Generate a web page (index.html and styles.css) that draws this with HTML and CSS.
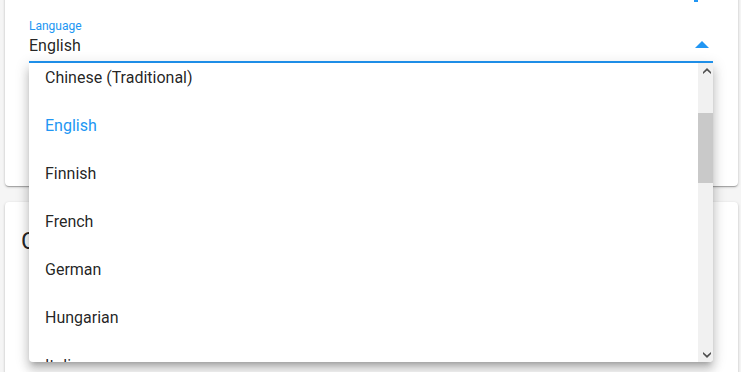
FILE: index.html
```html
<!DOCTYPE html>
<html lang="en">
<head>
<meta charset="utf-8">
<title>Settings</title>
<link rel="stylesheet" href="styles.css">
</head>
<body>
<div class="page">
  <section class="card card-general">
    <div class="top-row"><span class="top-icon"></span></div>
    <div class="field">
      <div class="field-label">Language</div>
      <div class="field-input">
        <span class="field-value">English</span>
        <svg class="field-arrow" width="14" height="7" viewBox="0 0 14 7"><path d="M0 7 L7 0 L14 7 Z" fill="#2196f3"/></svg>
      </div>
    </div>
  </section>
  <section class="card card-theme">
    <h2 class="card-title">Color theme</h2>
  </section>
</div>
<div class="menu">
  <div class="menu-viewport">
    <ul class="menu-list">
      <li class="menu-item">Arabic</li>
      <li class="menu-item">Catalan</li>
      <li class="menu-item">Chinese (Simplified)</li>
      <li class="menu-item">Chinese (Traditional)</li>
      <li class="menu-item is-selected">English</li>
      <li class="menu-item">Finnish</li>
      <li class="menu-item">French</li>
      <li class="menu-item">German</li>
      <li class="menu-item">Hungarian</li>
      <li class="menu-item">Italian</li>
      <li class="menu-item">Japanese</li>
      <li class="menu-item">Korean</li>
      <li class="menu-item">Norwegian</li>
      <li class="menu-item">Polish</li>
      <li class="menu-item">Portuguese</li>
      <li class="menu-item">Romanian</li>
      <li class="menu-item">Russian</li>
      <li class="menu-item">Slovak</li>
      <li class="menu-item">Spanish</li>
      <li class="menu-item">Swedish</li>
      <li class="menu-item">Turkish</li>
      <li class="menu-item">Ukrainian</li>
      <li class="menu-item">Vietnamese</li>
      <li class="menu-item">Welsh</li>
    </ul>
  </div>
  <div class="scrollbar">
    <div class="scroll-btn">
      <svg width="8" height="6" viewBox="0 0 8 6"><path d="M0 4 L4 0 L8 4 L8 6 L4 2.5 L0 6 Z" fill="#505050"/></svg>
    </div>
    <div class="scroll-track"><div class="scroll-thumb"></div></div>
    <div class="scroll-btn">
      <svg width="8" height="6" viewBox="0 0 8 6"><path d="M0 0 L4 3.5 L8 0 L8 2 L4 6 L0 2 Z" fill="#505050"/></svg>
    </div>
  </div>
</div>
<script src="script.js"></script>
</body>
</html>
```
FILE: styles.css
```css
html, body {
  margin: 0;
  padding: 0;
}
body {
  background: #f5f5f5;
  font-family: Roboto, "Liberation Sans", sans-serif;
  color: rgba(0, 0, 0, 0.87);
  overflow: hidden;
  height: 372px;
}
.page {
  padding: 0 3px 0 5px;
}
.card {
  background: #fff;
  border-radius: 4px;
  box-shadow: 0 1px 3px 0 rgba(0,0,0,0.2), 0 1px 1px 0 rgba(0,0,0,0.14), 0 2px 1px -1px rgba(0,0,0,0.12);
}
.card-general {
  margin-top: -22px;
  padding: 8px 25px 123px 24px;
}
.top-row {
  height: 16px;
  display: flex;
  justify-content: flex-end;
  align-items: flex-end;
  padding-right: 15px;
}
.top-icon {
  width: 4px;
  height: 2px;
  background: #2196f3;
}
.field {
  margin-top: 17px;
}
.field-label {
  font-size: 12px;
  line-height: 14px;
  color: #2196f3;
}
.field-input {
  display: flex;
  align-items: center;
  padding: 3px 0 6px;
  border-bottom: 2px solid #2196f3;
}
.field-value {
  flex: 1;
  font-size: 16px;
  line-height: 19px;
}
.field-arrow {
  display: block;
  margin: 0 4px 3px 0;
}
.card-theme {
  margin-top: 16px;
  padding: 23px 16px 16px;
  height: 200px;
}
.card-title {
  margin: 0;
  font-size: 24px;
  line-height: 32px;
  font-weight: 400;
}
.menu {
  position: absolute;
  left: 29px;
  top: 63px;
  width: 684px;
  height: 299px;
  display: flex;
  background: #fff;
  border-radius: 0 0 4px 4px;
  overflow: hidden;
  box-shadow: 0 5px 5px -3px rgba(0,0,0,0.2), 0 8px 10px 1px rgba(0,0,0,0.14), 0 3px 14px 2px rgba(0,0,0,0.12);
}
.menu-viewport {
  flex: 1;
  overflow: hidden;
}
.menu-list {
  list-style: none;
  margin: 0;
  padding: 8px 0;
}
.menu-item {
  height: 48px;
  line-height: 48px;
  padding: 0 16px;
  font-size: 16px;
  white-space: nowrap;
}
.menu-item.is-selected {
  color: #2196f3;
}
.scrollbar {
  width: 15px;
  display: flex;
  flex-direction: column;
  background: #f1f1f1;
}
.scroll-btn {
  height: 15px;
  display: flex;
  align-items: center;
  justify-content: center;
}
.scroll-btn svg {
  display: block;
  margin-left: 2px;
}
.scroll-track {
  flex: 1;
  padding-top: 35px;
}
.scroll-thumb {
  height: 70px;
  background: #c9c9c9;
}
```
FILE: script.js
```js
document.querySelector('.menu-viewport').scrollTop = 161;
```
